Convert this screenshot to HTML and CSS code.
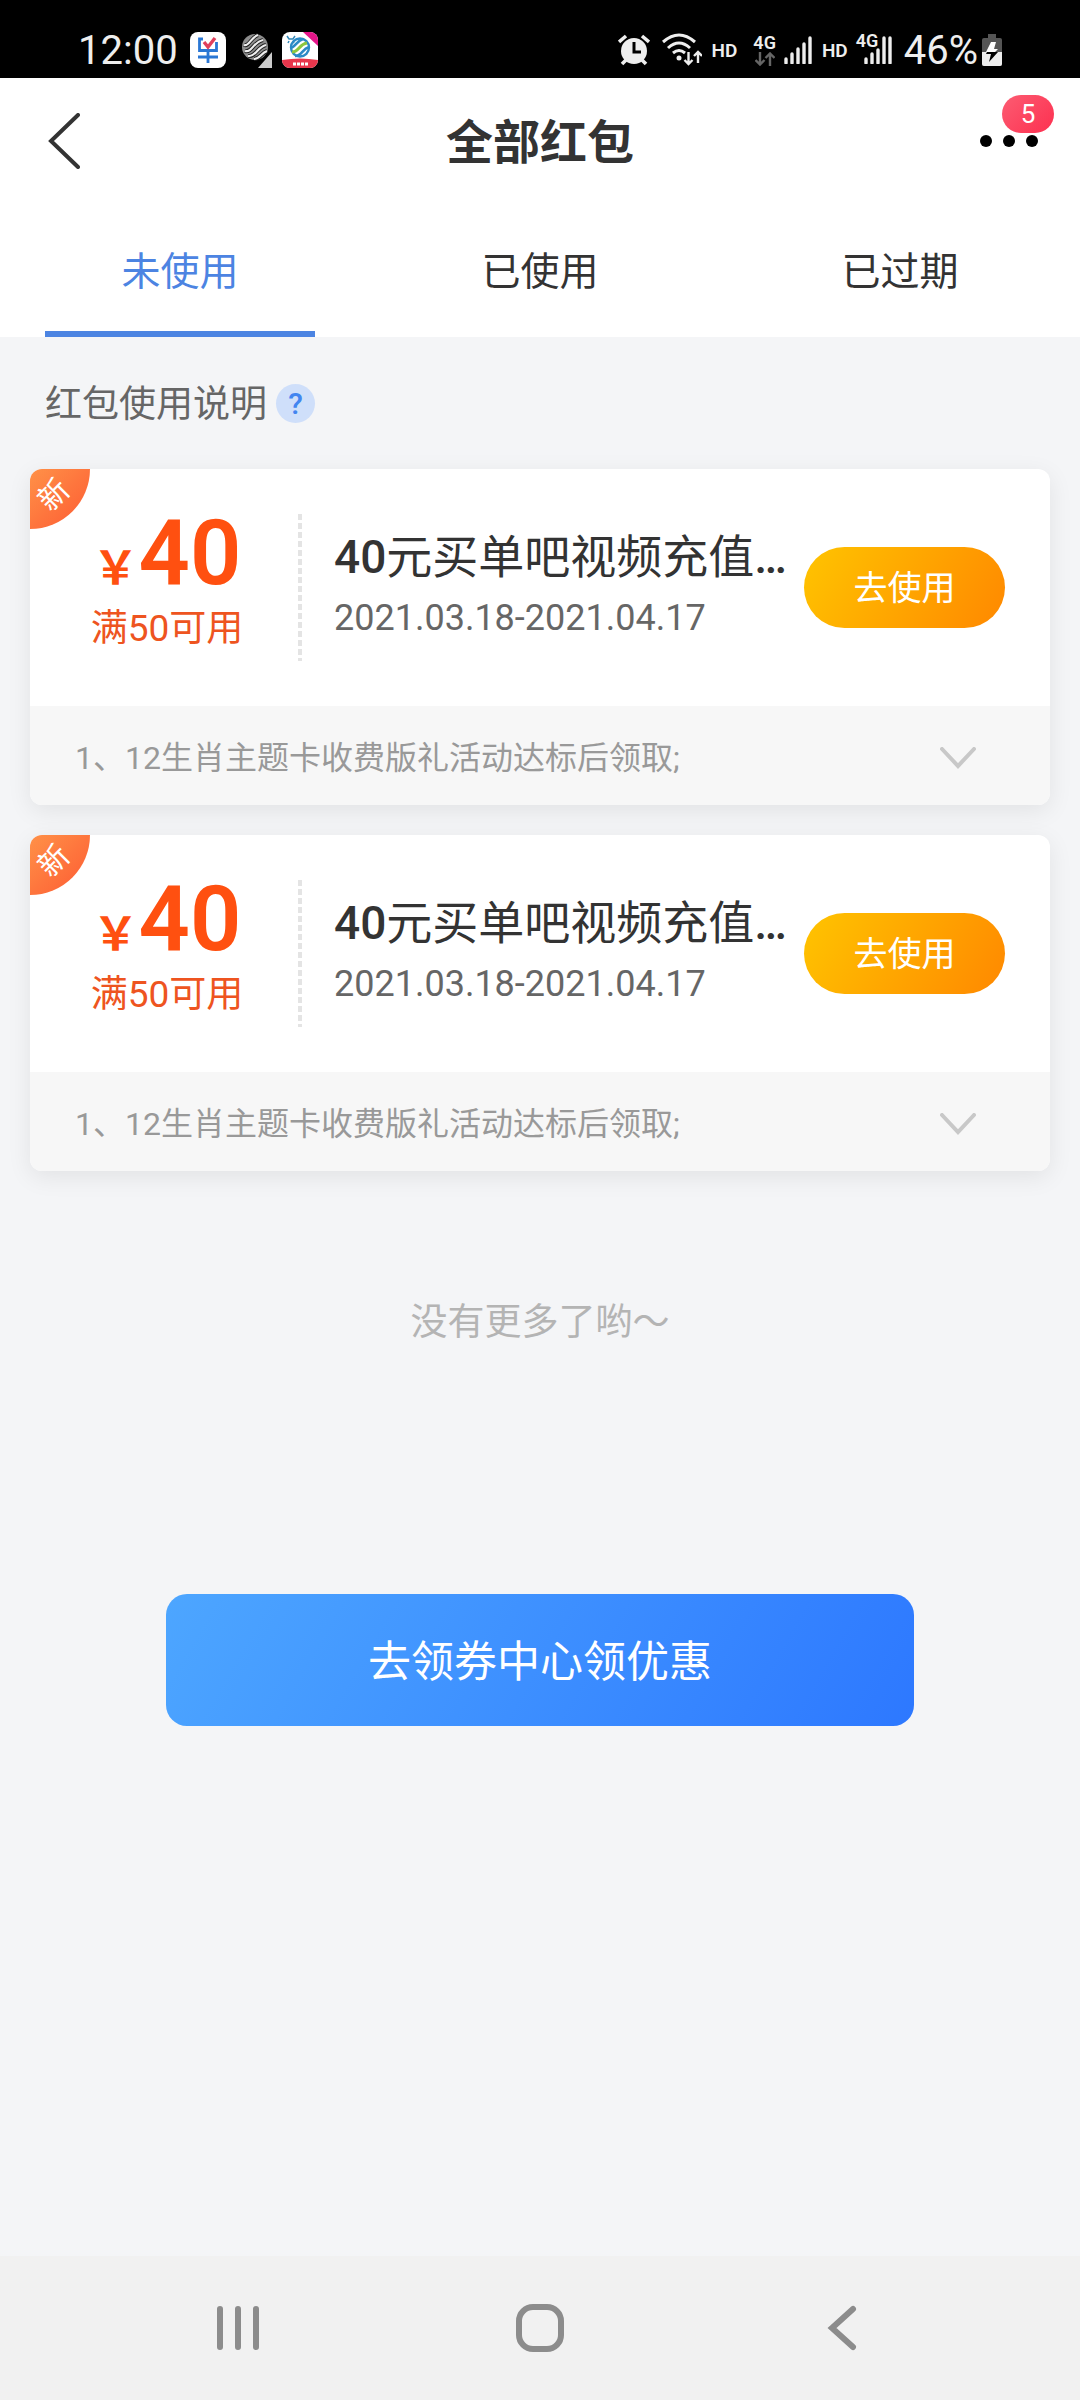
FILE: index.html
```html
<!DOCTYPE html>
<html lang="zh-CN">
<head>
<meta charset="utf-8">
<meta name="viewport" content="width=device-width, initial-scale=1">
<title>全部红包</title>
<link rel="stylesheet" href="styles.css">
</head>
<body>
<div class="status">
  <div class="status-group">
    <span class="status-time">12:00</span>
    <svg class="app-icon" width="36" height="36" viewBox="0 0 36 36" aria-hidden="true">
      <rect width="36" height="36" rx="8" fill="#fff"/>
      <path d="M13 7H9.500v11.500h17V10M8 25h20M18 18.500V31" fill="none" stroke="#2a77d4" stroke-width="2.800"/>
      <path d="M14 10l4 5 7-9" fill="none" stroke="#e0405c" stroke-width="3.400"/>
    </svg>
    <svg class="carrier-icon" width="30" height="36" viewBox="0 0 30 36" aria-hidden="true">
      <circle cx="13" cy="15" r="13" fill="#8d8d8d"/>
      <path d="M2 13c5 2 7-8 14-10M3 19c7 2 8-9 18-11M6 24c8 1 9-9 18-11M12 27c6 0 7-6 13-8" fill="none" stroke="#1d1d1d" stroke-width="4"/>
      <path d="M2 13c5 2 7-8 14-10M3 19c7 2 8-9 18-11M6 24c8 1 9-9 18-11M12 27c6 0 7-6 13-8" fill="none" stroke="#eee" stroke-width="2.200"/>
      <path d="M30 20v16H16z" fill="#ccc"/>
    </svg>
    <svg class="app-icon" width="36" height="36" viewBox="0 0 36 36" aria-hidden="true">
      <defs><clipPath id="app-clip"><rect width="36" height="36" rx="8"/></clipPath></defs>
      <g clip-path="url(#app-clip)">
        <rect width="36" height="36" fill="#fff"/>
        <path d="M21 0h15v14z" fill="#e5168a"/>
        <path d="M0 28q18-3 36 0v8H0z" fill="#e8364c"/>
        <path d="M11 32h15" stroke="#fff" stroke-width="3" stroke-dasharray="3 1"/>
        <path d="M5 4l2 3h4l2-3M7 9l-1 2M11 9l1 2" fill="none" stroke="#3388b8" stroke-width="1.500"/>
        <circle cx="18" cy="15.500" r="9" fill="none" stroke="#2c8ac6" stroke-width="2.400"/>
        <path d="M8 16c5 0 6-7 13-9" fill="none" stroke="#2c8ac6" stroke-width="2.600"/>
        <path d="M10 20c7 0 7-8 15-9" fill="none" stroke="#8cc63f" stroke-width="3"/>
        <path d="M13 24c7 0 7-7 14-9" fill="none" stroke="#2c8ac6" stroke-width="2.600"/>
      </g>
    </svg>
  </div>
  <div class="status-group">
    <svg class="alarm-icon" width="32" height="32" viewBox="0 0 32 32" aria-hidden="true">
      <circle cx="16" cy="17" r="13" fill="#eee"/>
      <path d="M1 8l7-6M31 8l-7-6M4 30l4-4M28 30l-4-4" stroke="#eee" stroke-width="3.600"/>
      <path d="M16 8v10h7" fill="none" stroke="#000" stroke-width="3"/>
    </svg>
    <svg class="wifi-icon" width="40" height="34" viewBox="0 0 40 34" aria-hidden="true">
      <g fill="none" stroke="#eee" stroke-width="3">
        <path d="M1 9q16-14 32 0"/><path d="M6 15q11-10 22 0"/><path d="M11 20q6-5 12 0"/>
      </g>
      <circle cx="17" cy="25" r="2.500" fill="#eee"/>
      <path d="M26.500 19v11M22.500 27l4 4 4-4M36 30V19M32 23l4-4 4 4" fill="none" stroke="#eee" stroke-width="2.400"/>
    </svg>
    <span class="status-tag">HD</span>
    <span class="network">
      <span class="network-type">4G</span>
      <svg width="20" height="14" viewBox="0 0 20 14" aria-hidden="true">
        <path d="M5 0v12M0.500 8l4.500 4.500L9.500 8M15 14V2M10.500 6L15 1.500 19.500 6" fill="none" stroke="#666" stroke-width="2.400"/>
      </svg>
    </span>
    <svg class="signal" width="28" height="28" viewBox="0 0 28 28" aria-hidden="true">
      <path d="M2 23v4M8 18v9M14 13v14M20 8v19M26 2v25" stroke="#eee" stroke-width="3.400" stroke-linecap="round"/>
    </svg>
    <span class="status-tag">HD</span>
    <span class="network network-stacked">
      <span class="network-type">4G</span>
      <svg class="signal" width="28" height="28" viewBox="0 0 28 28" aria-hidden="true">
        <path d="M2 23v4M8 18v9M14 14v13M20 2v25M26 2v25" stroke="#eee" stroke-width="3.400" stroke-linecap="round"/>
      </svg>
    </span>
    <span class="status-time">46%</span>
    <svg class="battery" width="20" height="32" viewBox="0 0 20 32" aria-hidden="true">
      <path d="M6 0h8v5H6z" fill="#555"/><rect y="4" width="20" height="28" rx="2" fill="#555"/>
      <path d="M0 18h20v12a2 2 0 0 1-2 2H2a2 2 0 0 1-2-2z" fill="#eee"/>
      <path d="M7 28l2-8H4l1-2h11z" fill="#000"/><path d="M9 8h5l-2 7h4l-3 3H4z" fill="#fff"/>
    </svg>
  </div>
</div>

<header class="header">
  <button class="icon-button" type="button" aria-label="返回">
    <svg width="32" height="56" viewBox="0 0 32 56"><path d="M30 2L3 28l27 26" fill="none" stroke="#333" stroke-width="4" stroke-linecap="round"/></svg>
  </button>
  <h1 class="title">全部红包</h1>
  <button class="icon-button more" type="button" aria-label="更多">
    <svg width="58" height="12" viewBox="0 0 58 12"><circle cx="6" cy="6" r="6"/><circle cx="29" cy="6" r="6"/><circle cx="52" cy="6" r="6"/></svg>
    <span class="badge">5</span>
  </button>
</header>

<nav class="tabs" aria-label="红包状态">
  <button class="tab tab-active" type="button">未使用</button>
  <button class="tab" type="button">已使用</button>
  <button class="tab" type="button">已过期</button>
</nav>

<main class="content">
  <a class="help" href="#help"><span class="help-text">红包使用说明</span><span class="help-mark">?</span></a>

  <article class="coupon">
    <div class="coupon-main">
      <span class="ribbon"><span class="ribbon-text">新</span></span>
      <div class="value">
        <div class="amount"><span class="currency">￥</span>40</div>
        <div class="condition">满50可用</div>
      </div>
      <div class="info">
        <h2 class="name">40<span class="name-text">元买单吧视频充值</span>…</h2>
        <p class="dates">2021.03.18-2021.04.17</p>
      </div>
      <button class="use" type="button">去使用</button>
    </div>
    <button class="rules" type="button">
      <span>1、12生肖主题卡收费版礼活动达标后领取;</span>
      <svg class="rules-arrow" width="36" height="22" viewBox="0 0 36 22" aria-hidden="true"><path d="M2 2l16 17L34 2" fill="none" stroke="#c8c8c8" stroke-width="4" stroke-linecap="round"/></svg>
    </button>
  </article>

  <article class="coupon">
    <div class="coupon-main">
      <span class="ribbon"><span class="ribbon-text">新</span></span>
      <div class="value">
        <div class="amount"><span class="currency">￥</span>40</div>
        <div class="condition">满50可用</div>
      </div>
      <div class="info">
        <h2 class="name">40<span class="name-text">元买单吧视频充值</span>…</h2>
        <p class="dates">2021.03.18-2021.04.17</p>
      </div>
      <button class="use" type="button">去使用</button>
    </div>
    <button class="rules" type="button">
      <span>1、12生肖主题卡收费版礼活动达标后领取;</span>
      <svg class="rules-arrow" width="36" height="22" viewBox="0 0 36 22" aria-hidden="true"><path d="M2 2l16 17L34 2" fill="none" stroke="#c8c8c8" stroke-width="4" stroke-linecap="round"/></svg>
    </button>
  </article>

  <p class="end">没有更多了哟～</p>
  <button class="center-button" type="button">去领券中心领优惠</button>
</main>

<nav class="system-nav" aria-label="系统导航">
  <button class="system-button" type="button" aria-label="最近任务">
    <svg width="48" height="48" viewBox="0 0 48 48"><path d="M6 5v38M24 5v38M42 5v38" stroke="#8c8c8c" stroke-width="6" stroke-linecap="round"/></svg>
  </button>
  <button class="system-button" type="button" aria-label="主屏幕">
    <svg width="48" height="48" viewBox="0 0 48 48"><rect x="3" y="3" width="42" height="42" rx="14" fill="none" stroke="#8c8c8c" stroke-width="6"/></svg>
  </button>
  <button class="system-button" type="button" aria-label="返回上一页">
    <svg width="48" height="48" viewBox="0 0 48 48"><path d="M35 5L14 24l21 19" fill="none" stroke="#8c8c8c" stroke-width="6" stroke-linecap="round"/></svg>
  </button>
</nav>
</body>
</html>
```

FILE: styles.css
```css
* {
  box-sizing: border-box;
}

body {
  display: flex;
  flex-direction: column;
  min-height: 100vh;
  margin: 0;
  background: #f4f5f7;
  color: #333;
  font-family: Roboto, "Noto Sans CJK SC", sans-serif;
}

h1, h2, p {
  margin: 0;
}

button {
  padding: 0;
  border: 0;
  background: none;
  color: inherit;
  font: inherit;
}

svg {
  display: block;
  flex: none;
}

/* Status bar */
.status {
  display: flex;
  justify-content: space-between;
  height: 78px;
  padding: 22px 78px 0;
  background: #000;
  color: #eee;
}

.status-group {
  display: flex;
  align-items: center;
  height: 56px;
}

.status-time {
  padding-top: 2px;
  font-size: 40px;
  line-height: 56px;
}

.app-icon {
  margin-left: 12px;
}

.carrier-icon {
  margin-left: 16px;
}

.carrier-icon + .app-icon {
  margin-left: 10px;
}

.wifi-icon {
  margin: 0 10px 0 12px;
}

.status-tag {
  font-size: 19px;
  font-weight: 600;
}

.network {
  display: flex;
  flex-direction: column;
  align-items: center;
  margin: 0 8px 0 16px;
}

.network-type {
  font-size: 18px;
  font-weight: 600;
  line-height: 18px;
}

.signal {
  margin-right: 10px;
}

.network-stacked {
  position: relative;
  margin: 0 12px 0 16px;
}

.network-stacked .signal {
  margin: 0;
}

.network-stacked .network-type {
  position: absolute;
  top: -4px;
  left: -8px;
}

.battery {
  margin-left: 4px;
}

/* Header */
.header {
  display: grid;
  grid-template-columns: 1fr auto 1fr;
  align-items: center;
  height: 126px;
  padding: 0 42px;
  background: #fff;
}

.icon-button {
  justify-self: start;
  padding-left: 6px;
}

.title {
  padding-top: 4px;
  font-size: 47px;
  font-weight: 700;
  line-height: 64px;
}

.more {
  position: relative;
  justify-self: end;
}

.badge {
  position: absolute;
  right: -16px;
  bottom: 14px;
  width: 52px;
  height: 38px;
  border-radius: 19px;
  background: linear-gradient(135deg, #fc5c72, #fd3050);
  color: #fff;
  font-size: 26px;
  line-height: 38px;
}

/* Tabs */
.tabs {
  display: grid;
  grid-template-columns: repeat(3, 1fr);
  background: #fff;
}

.tab {
  height: 133px;
  margin: 0 45px;
  border-bottom: 6px solid transparent;
  font-size: 39px;
}

.tab-active {
  border-color: #4c84e2;
  color: #4c84e2;
}

/* Coupons */
.content {
  display: flex;
  flex-direction: column;
  gap: 30px;
  padding: 35px 30px 0;
}

.help {
  display: flex;
  align-items: center;
  gap: 9px;
  height: 62px;
  margin-bottom: 5px;
  padding-left: 15px;
  color: #666;
  font-size: 37px;
  text-decoration: none;
}

.help-text {
  padding-bottom: 4px;
}

.help-mark {
  width: 39px;
  height: 39px;
  border-radius: 50%;
  background: #cfdffa;
  color: #4285f0;
  font-size: 30px;
  font-weight: 500;
  line-height: 39px;
  text-align: center;
}

.coupon {
  overflow: hidden;
  border-radius: 12px;
  background: #fff;
  box-shadow: 0 6px 24px rgba(0, 0, 0, 0.08);
}

.coupon-main {
  position: relative;
  display: flex;
  align-items: center;
  height: 237px;
  padding-right: 45px;
}

.ribbon {
  position: absolute;
  top: 0;
  left: 0;
  width: 60px;
  height: 60px;
  border-radius: 0 0 60px;
  background: linear-gradient(135deg, #ff9148, #fd5a32);
  color: #fff;
}

.ribbon-text {
  display: block;
  width: 48px;
  font-size: 30px;
  line-height: 52px;
  text-align: center;
  transform: rotate(-45deg);
}

.value {
  flex: none;
  width: 272px;
  height: 147px;
  background: repeating-linear-gradient(#e4e4e4 0 6px, #fff 6px 9px) right / 4px 100% no-repeat;
  text-align: center;
}

.amount {
  height: 90px;
  padding-left: 2px;
  color: #ff5010;
  font-size: 90px;
  font-weight: 600;
  line-height: 80px;
}

.currency {
  font-size: 46px;
  font-weight: 700;
  line-height: 48px;
}

.condition {
  padding-left: 2px;
  color: #ee5420;
  font-size: 37px;
  line-height: 50px;
}

.info {
  flex: 1;
  min-width: 0;
  padding: 0 8px 4px 32px;
}

.name {
  font-size: 46px;
  font-weight: 500;
  line-height: 64px;
  white-space: nowrap;
}

.name-text {
  font-weight: 400;
}

.dates {
  color: #666;
  font-size: 36px;
  line-height: 58px;
}

.use {
  flex: none;
  width: 201px;
  height: 81px;
  padding-bottom: 4px;
  border-radius: 41px;
  background: linear-gradient(120deg, #ffc400, #ff8800);
  color: #fff;
  font-size: 34px;
}

.rules {
  display: flex;
  align-items: center;
  justify-content: space-between;
  width: 100%;
  height: 99px;
  padding: 0 74px 2px 45px;
  background: #f7f7f7;
  color: #999;
  font-size: 32px;
  text-align: left;
}

.rules-arrow {
  margin-top: 6px;
}

.end {
  margin-top: 94px;
  color: #b4b4b4;
  font-size: 37px;
  line-height: 56px;
  text-align: center;
}

.center-button {
  height: 132px;
  margin: 213px 136px 60px;
  padding-bottom: 4px;
  border-radius: 21px;
  background: linear-gradient(120deg, #4da6ff, #2d78ff);
  color: #fff;
  font-size: 43px;
}

/* System navigation */
.system-nav {
  display: flex;
  justify-content: space-between;
  height: 144px;
  margin-top: auto;
  padding: 0 168px;
  background: #f1f1f1;
}

.system-button {
  display: flex;
  align-items: center;
  justify-content: center;
  width: 140px;
}
```
